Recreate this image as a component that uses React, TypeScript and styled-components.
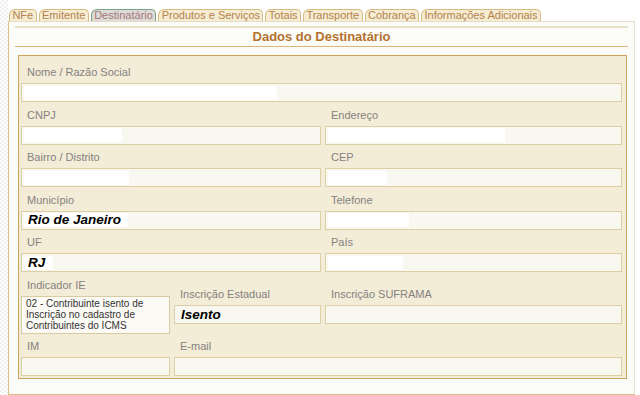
import React from 'react'
import styled, { createGlobalStyle } from 'styled-components'

const GlobalStyle = createGlobalStyle`
    html, body {
        margin: 0;
        padding: 0;
    }
    body {
        font-family: "Liberation Sans", Arial, sans-serif;
        background:
            linear-gradient(to right, transparent 8px, #fff 8px),
            repeating-conic-gradient(#efefef 0 25%, #fff 0 50%) 0 0 / 4px 4px;
    }
`;

const Page = styled.div`
    width: 640px;
    height: 395px;
    box-sizing: border-box;
    padding: 9px 0 0 8px;
`;

const TabBar = styled.div`
    display: flex;
    gap: 2px;
    padding-left: 1px;
    height: 12px;
`;

const Tab = styled.div<{ $active?: boolean }>`
    box-sizing: border-box;
    height: 12px;
    padding: 0 2.4px;
    border: 1px solid ${(p) => (p.$active ? '#78a286' : '#d7bb7e')};
    border-bottom: none;
    border-radius: 6px 5px 0 0;
    background: ${(p) => (p.$active ? '#dfdbd6' : '#f5ecd2')};
    color: ${(p) => (p.$active ? '#a27878' : '#b3834f')};
    font-size: 11px;
    line-height: 11px;
    white-space: nowrap;
`;

const Panel = styled.div`
    box-sizing: border-box;
    width: 627px;
    height: 374px;
    padding: 4px 6px 0 6px;
    background: #fbfbf8;
    border: 1px solid #e6dcc5;
    border-left-color: #dcc087;
    border-bottom-color: #d9bc84;
    border-right-color: #e7e2d8;
`;

const Header = styled.div`
    border-top: 2px solid #e9e0cb;
    border-bottom: 1px solid #d8b777;
    height: 18px;
    line-height: 18px;
    text-align: center;
    color: #b3732f;
    font-size: 13px;
    font-weight: bold;
`;

const Fieldset = styled.div`
    box-sizing: border-box;
    width: 609px;
    margin: 8px 0 0 3px;
    padding: 3.5px 3px 2px 2px;
    background: #f3ecd7;
    border: 1px solid #c9a45e;
    display: grid;
    grid-template-columns: 149px 147px 297px;
    column-gap: 4px;
`;

const Field = styled.div<{ $span?: number; $center?: boolean }>`
    grid-column: span ${(p) => p.$span ?? 1};
    align-self: ${(p) => (p.$center ? 'center' : 'start')};
    display: flex;
    flex-direction: column;
`;

const Label = styled.div`
    padding: 5.5px 0 0 6px;
    margin-bottom: 4px;
    height: 14px;
    line-height: 14px;
    font-size: 11px;
    color: #85827f;
    white-space: nowrap;
`;

const Input = styled.div`
    box-sizing: border-box;
    height: 19px;
    padding: 0 2px;
    display: flex;
    align-items: center;
    background: #f9f8f0;
    border: 1px solid #dccfa6;
`;

const Fill = styled.div<{ $width?: number }>`
    box-sizing: border-box;
    width: ${(p) => (p.$width !== undefined ? `${p.$width}px` : 'auto')};
    height: 14px;
    padding-left: 4px;
    background: ${(p) => (p.$width !== undefined ? '#ffffff' : 'transparent')};
    color: #000;
    font-size: 13.5px;
    font-weight: bold;
    font-style: italic;
    line-height: 14px;
    white-space: nowrap;
`;

const TextBox = styled.div`
    box-sizing: border-box;
    height: 38px;
    padding: 1px 4px;
    background: #fbfaf4;
    border: 1px solid #d8cba2;
    font-size: 10px;
    line-height: 11px;
    color: #333;
`;

const tabs = [
    'NFe',
    'Emitente',
    'Destinatário',
    'Produtos e Serviços',
    'Totais',
    'Transporte',
    'Cobrança',
    'Informações Adicionais',
];

interface FieldProps {
    label: string;
    span?: number;
    fill?: number;
    value?: string;
    center?: boolean;
}

const TextField = ({ label, span, fill, value, center }: FieldProps) => (
    <Field $span={span} $center={center}>
        <Label>{label}</Label>
        <Input>
            {(fill !== undefined || value) && <Fill $width={fill}>{value}</Fill>}
        </Input>
    </Field>
);

export default function App() {
    return (
        <Page>
            <GlobalStyle />
            <TabBar>
                {tabs.map((tab) => (
                    <Tab key={tab} $active={tab === 'Destinatário'}>{tab}</Tab>
                ))}
            </TabBar>
            <Panel>
                <Header>Dados do Destinatário</Header>
                <Fieldset>
                    <TextField label="Nome / Razão Social" span={3} fill={253} />

                    <TextField label="CNPJ" span={2} fill={98} />
                    <TextField label="Endereço" fill={177} />

                    <TextField label="Bairro / Distrito" span={2} fill={105} />
                    <TextField label="CEP" fill={59} />

                    <TextField label="Município" span={2} fill={104} value="Rio de Janeiro" />
                    <TextField label="Telefone" fill={81} />

                    <TextField label="UF" span={2} fill={29} value="RJ" />
                    <TextField label="País" fill={75} />

                    <Field>
                        <Label>Indicador IE</Label>
                        <TextBox>
                            02 - Contribuinte isento de<br />
                            Inscrição no cadastro de<br />
                            Contribuintes do ICMS
                        </TextBox>
                    </Field>
                    <TextField label="Inscrição Estadual" value="Isento" center />
                    <TextField label="Inscrição SUFRAMA" center />

                    <TextField label="IM" />
                    <TextField label="E-mail" span={2} />
                </Fieldset>
            </Panel>
        </Page>
    );
}
